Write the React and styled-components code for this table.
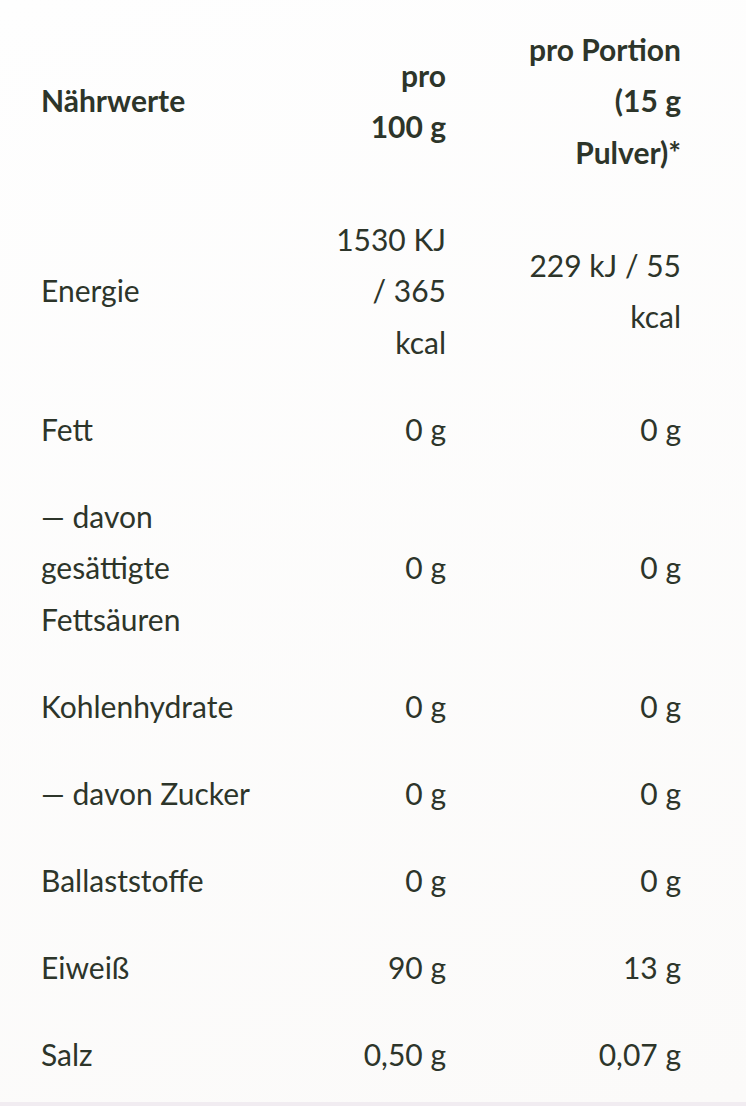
import React from 'react'
import styled, { createGlobalStyle } from 'styled-components'

const GlobalStyle = createGlobalStyle`
    html, body {
        margin: 0;
        padding: 0;
        background: #fcfbfa;
    }
`

const data = [
    { label: 'Energie', per100: '1530 KJ / 365 kcal', perPortion: '229 kJ / 55 kcal' },
    { label: 'Fett', per100: '0 g', perPortion: '0 g' },
    { label: '— davon gesättigte Fettsäuren', per100: '0 g', perPortion: '0 g' },
    { label: 'Kohlenhydrate', per100: '0 g', perPortion: '0 g' },
    { label: '— davon Zucker', per100: '0 g', perPortion: '0 g' },
    { label: 'Ballaststoffe', per100: '0 g', perPortion: '0 g' },
    { label: 'Eiweiß', per100: '90 g', perPortion: '13 g' },
    { label: 'Salz', per100: '0,50 g', perPortion: '0,07 g' },
]

export default function App() {
    return (
        <Page>
            <GlobalStyle />
            <Table>
                <Row>
                    <Cell $head>Nährwerte</Cell>
                    <Cell $head $num $inset={62}>pro 100&nbsp;g</Cell>
                    <Cell $head $num $inset={70}>pro Portion (15&nbsp;g Pulver)*</Cell>
                </Row>
                {data.map((r, idx) => (
                    <Row key={idx}>
                        <Cell>{r.label}</Cell>
                        <Cell $num $inset={62}>{r.per100}</Cell>
                        <Cell $num $inset={70}>{r.perPortion}</Cell>
                    </Row>
                ))}
            </Table>
            <Strip />
        </Page>
    )
}

const Page = styled.div`
    min-height: 1106px;
    background: linear-gradient(160deg, #fefefe 0%, #fbfaf9 100%);
    padding-top: 6px;
    box-sizing: border-box;
    display: flex;
    flex-direction: column;
`

const Table = styled.div`
    padding: 0 65px 0 41px;
    display: flex;
    flex-direction: column;
    flex: 1;
`

const Row = styled.div`
    display: grid;
    grid-template-columns: 230px 175px 235px;
    align-items: center;
    padding: 17.75px 0;
`

const Cell = styled.div`
    font-family: Lato, "Noto Sans", sans-serif;
    font-size: 30px;
    line-height: 51.5px;
    font-weight: ${p => (p.$head ? 700 : 400)};
    color: #2d352a;
    text-align: ${p => (p.$num ? 'right' : 'left')};
    padding-left: ${p => p.$inset || 0}px;
`

const Strip = styled.div`
    height: 4px;
    background: #f1ecf1;
`
